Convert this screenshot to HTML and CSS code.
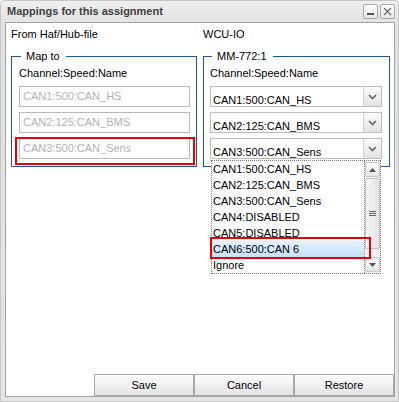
FILE: index.html
```html
<!DOCTYPE html>
<html lang="en">
<head>
    <meta charset="UTF-8">
    <title>Mappings for this assignment</title>
    <link rel="stylesheet" href="styles.css">
</head>
<body>

    <div class="window">
        <div class="header">
            <span class="title">Mappings for this assignment</span>
            <div class="tools">
                <span class="tool">
                    <svg width="13" height="13" viewBox="0 0 13 13"><rect x="3" y="8" width="7" height="2" fill="#555"/></svg>
                </span>
                <span class="tool">
                    <svg width="13" height="13" viewBox="0 0 13 13"><path d="M3 3 L10 10 M10 3 L3 10" stroke="#666" stroke-width="1.1" fill="none"/></svg>
                </span>
            </div>
        </div>

        <div class="body">
            <div class="columns">
                <div class="col">
                    <div class="source">From Haf/Hub-file</div>
                    <fieldset class="group group-left">
                        <legend>Map to</legend>
                        <div class="field-label">Channel:Speed:Name</div>
                        <div class="text-field">CAN1:500:CAN_HS</div>
                        <div class="text-field">CAN2:125:CAN_BMS</div>
                        <div class="text-field">CAN3:500:CAN_Sens<span class="mark mark-field"></span></div>
                    </fieldset>
                </div>

                <div class="col">
                    <div class="source">WCU-IO</div>
                    <fieldset class="group group-right">
                        <legend>MM-772:1</legend>
                        <div class="field-label">Channel:Speed:Name</div>
                        <div class="combo">
                            <span class="combo-text">CAN1:500:CAN_HS</span>
                            <span class="combo-btn"><svg width="9" height="6" viewBox="0 0 9 6"><path d="M1 1 L4.5 4.5 L8 1" stroke="#666" stroke-width="1.6" fill="none"/></svg></span>
                        </div>
                        <div class="combo">
                            <span class="combo-text">CAN2:125:CAN_BMS</span>
                            <span class="combo-btn"><svg width="9" height="6" viewBox="0 0 9 6"><path d="M1 1 L4.5 4.5 L8 1" stroke="#666" stroke-width="1.6" fill="none"/></svg></span>
                        </div>
                        <div class="combo">
                            <span class="combo-text">CAN3:500:CAN_Sens</span>
                            <span class="combo-btn"><svg width="9" height="6" viewBox="0 0 9 6"><path d="M1 1 L4.5 4.5 L8 1" stroke="#666" stroke-width="1.6" fill="none"/></svg></span>

                            <div class="dropdown">
                                <ul class="options">
                                    <li>CAN1:500:CAN_HS</li>
                                    <li>CAN2:125:CAN_BMS</li>
                                    <li>CAN3:500:CAN_Sens</li>
                                    <li>CAN4:DISABLED</li>
                                    <li>CAN5:DISABLED</li>
                                    <li class="selected">CAN6:500:CAN 6<span class="mark mark-option"></span></li>
                                    <li>Ignore</li>
                                </ul>
                                <div class="scrollbar">
                                    <span class="sb-btn"><svg width="7" height="4" viewBox="0 0 7 4"><path d="M0 4 L3.5 0 L7 4 Z" fill="#555"/></svg></span>
                                    <span class="sb-thumb"><svg width="7" height="6" viewBox="0 0 7 6"><path d="M0 0.5 H7 M0 2.5 H7 M0 4.5 H7" stroke="#666" stroke-width="1"/></svg></span>
                                    <span class="sb-track"></span>
                                    <span class="sb-btn"><svg width="7" height="4" viewBox="0 0 7 4"><path d="M0 0 L3.5 4 L7 0 Z" fill="#555"/></svg></span>
                                </div>
                            </div>
                        </div>
                    </fieldset>
                </div>
            </div>

            <div class="buttons">
                <button class="btn">Save</button>
                <button class="btn">Cancel</button>
                <button class="btn">Restore</button>
            </div>
        </div>
    </div>

</body>
</html>
```

FILE: styles.css
```css
* {
    box-sizing: border-box;
    margin: 0;
    padding: 0;
}
body {
    font-family: "Liberation Sans", Arial, sans-serif;
    font-size: 11px;
    color: #000;
    background: #fff;
}
.window {
    width: 399px;
    height: 402px;
    display: flex;
    flex-direction: column;
    padding: 0 3px 4px 4px;
    background: linear-gradient(#efefef, #e2e2e2 22px, #e4e4e4);
    border: 1px solid #c6c6c6;
    border-radius: 4px 4px 0 0;
}
.header {
    height: 21px;
    display: flex;
    align-items: flex-start;
    justify-content: space-between;
    padding-left: 2px;
}
.title {
    font-weight: bold;
    color: #3f3f3f;
    line-height: 13px;
    padding-top: 4px;
}
.tools {
    display: flex;
    gap: 2px;
    padding-top: 3px;
}
.tool {
    width: 15px;
    height: 15px;
    display: flex;
    align-items: center;
    justify-content: center;
    border: 1px solid #a9a9a9;
    border-radius: 2px;
    background: linear-gradient(#fdfdfd, #e6e6e6);
}
.body {
    flex: 1;
    display: flex;
    flex-direction: column;
    background: #fff;
    border: 1px solid #a4a4a4;
}
.columns {
    display: grid;
    grid-template-columns: 186px 187px;
    column-gap: 6px;
    padding: 5px 0 0 5px;
}
.source {
    line-height: 13px;
}
.group {
    margin-top: 9px;
    border: 1px solid #1f5596;
    min-width: 0;
}
.group-left {
    padding: 4px 6px 7px 7px;
}
.group-right {
    padding: 4px 7px 7px 6px;
}
.group legend {
    margin-left: 2px;
    padding: 0 6px 0 5px;
    line-height: 13px;
}
.field-label {
    line-height: 13px;
    margin-bottom: 6px;
}
.text-field {
    position: relative;
    height: 21px;
    line-height: 19px;
    padding-left: 3px;
    border: 1px solid #b9b9b9;
    color: #b3b3b3;
    background: #fff;
}
.text-field + .text-field {
    margin-top: 5px;
}
.mark {
    position: absolute;
    border: 2px solid #e8000b;
    pointer-events: none;
    z-index: 3;
}
.mark-field {
    top: -2px;
    bottom: -7px;
    left: -5px;
    right: -6px;
}
.combo {
    position: relative;
    height: 21px;
    display: flex;
    border: 1px solid #bdbdbd;
    background: #fff;
}
.combo + .combo {
    margin-top: 5px;
}
.combo-text {
    flex: 1;
    padding: 7px 0 0 2px;
    line-height: 12px;
}
.combo-btn {
    width: 18px;
    display: flex;
    align-items: center;
    justify-content: center;
    border-left: 1px solid #d2d2d2;
    background: linear-gradient(#fafafa, #e3e3e3);
}
.dropdown {
    position: absolute;
    top: 21px;
    left: 0;
    width: 170px;
    display: flex;
    border: 1px dotted #7a7a7a;
    background: #fff;
    z-index: 2;
}
.options {
    flex: 1;
    list-style: none;
    border-right: 1px dotted #8a8a8a;
}
.options li {
    position: relative;
    height: 16px;
    line-height: 16px;
    padding-left: 1px;
    white-space: nowrap;
}
.options li.selected {
    background: linear-gradient(#e4f1fd, #c7e2fa);
}
.mark-option {
    top: -4px;
    bottom: -2px;
    left: -2px;
    right: -7px;
}
.scrollbar {
    width: 15px;
    display: flex;
    flex-direction: column;
    padding: 1px 0;
    background: #f1f1f1;
}
.sb-btn {
    height: 15px;
    display: flex;
    align-items: center;
    justify-content: center;
    border: 1px solid #c9c9c9;
    border-radius: 2px;
    background: linear-gradient(#fbfbfb, #e7e7e7);
}
.sb-thumb {
    height: 71px;
    margin-top: 1px;
    display: flex;
    align-items: center;
    justify-content: center;
    border: 1px solid #c3c3c3;
    border-radius: 2px;
    background: linear-gradient(to right, #f7f7f7, #e2e2e2);
}
.sb-track {
    flex: 1;
}
.buttons {
    margin-top: auto;
    display: flex;
    justify-content: flex-end;
}
.btn {
    width: 100px;
    height: 22px;
    font-family: inherit;
    font-size: 11px;
    color: #000;
    border: 1px solid #a9a9a9;
    background: linear-gradient(#fcfcfc, #e4e4e4);
    cursor: pointer;
}
.btn:hover {
    background: linear-gradient(#ffffff, #ececec);
}
```
